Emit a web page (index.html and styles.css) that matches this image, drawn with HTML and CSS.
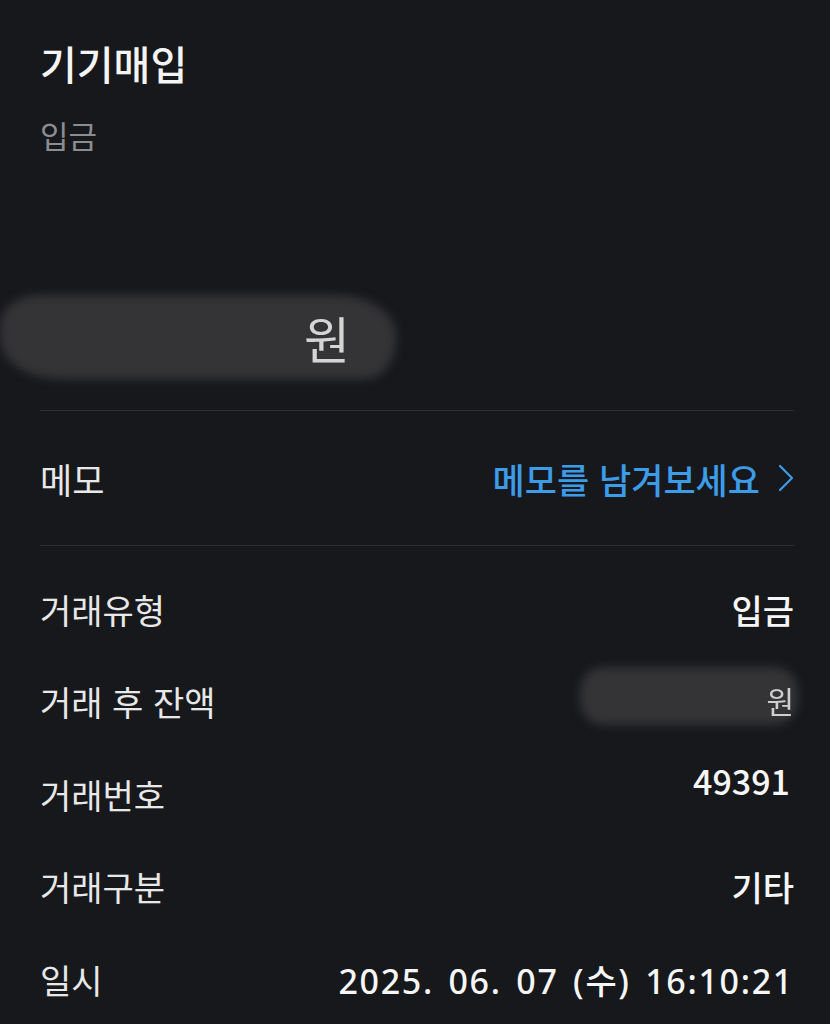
FILE: index.html
```html
<!DOCTYPE html>
<html lang="ko">
<head>
<meta charset="utf-8">
<link rel="stylesheet" href="styles.css">
</head>
<body>
<main class="page">
  <header class="head">
    <h1 class="title">기기매입</h1>
    <p class="subtitle">입금</p>
    <div class="amount">
      <span class="smudge smudge-big"></span>
      <span class="masked masked-big">1,234,567</span><span class="won">원</span>
    </div>
  </header>
  <hr class="divider">
  <section class="memo">
    <span class="label memo-label">메모</span>
    <a class="memo-link">메모를 남겨보세요
      <svg class="chev" width="16" height="28" viewBox="0 0 16 28"><path d="M2 2 L14 14 L2 26" fill="none" stroke="#3d9ce8" stroke-width="2.2" stroke-linecap="round" stroke-linejoin="round"/></svg>
    </a>
  </section>
  <hr class="divider">
  <section class="details">
    <div class="row"><span class="label">거래유형</span><span class="value">입금</span></div>
    <div class="row"><span class="label">거래 후 잔액</span>
      <span class="value balance"><span class="smudge smudge-small"></span><span class="masked masked-small">123,456</span><span class="won-small">원</span></span>
    </div>
    <div class="row"><span class="label">거래번호</span><span class="value raised">49391</span></div>
    <div class="row"><span class="label">거래구분</span><span class="value">기타</span></div>
    <div class="row"><span class="label">일시</span><span class="value date">2025. 06. 07 (수) 16:10:21</span></div>
  </section>
</main>
</body>
</html>
```

FILE: styles.css
```css
html, body {
  margin: 0;
  padding: 0;
  background: #17181c;
}
body {
  font-family: "Noto Sans CJK KR", "Noto Sans", sans-serif;
  color: #ececec;
  width: 830px;
  height: 1024px;
  overflow: hidden;
}
.page {
  padding: 0 36px 0 40px;
}
.head {
  padding-top: 36px;
}
.title {
  margin: 0;
  font-size: 40px;
  line-height: 54px;
  font-weight: 500;
  color: #f4f4f4;
}
.subtitle {
  margin: 24px 0 0;
  font-size: 31px;
  line-height: 42px;
  color: #8c8d91;
  font-weight: 400;
}
.amount {
  position: relative;
  margin-top: 145px;
  height: 72px;
  display: flex;
  align-items: center;
  font-size: 50px;
  font-weight: 400;
  color: #f0f0f0;
}
.masked {
  display: inline-block;
  color: transparent;
  overflow: hidden;
  white-space: nowrap;
}
.masked-big {
  width: 264px;
}
.won {
  position: relative;
  z-index: 2;
  opacity: 0.85;
}
.smudge {
  position: absolute;
  background: #343436;
  filter: blur(5px);
  z-index: 1;
}
.smudge-big {
  left: -40px;
  top: -6px;
  width: 396px;
  height: 84px;
  border-radius: 40px 60px 30px 60px / 30px 40px 40px 40px;
}
.divider {
  margin: 37px 0 0;
  border: 0;
  height: 1px;
  background: #2d2f34;
}
.memo {
  height: 134px;
  display: flex;
  align-items: center;
  justify-content: space-between;
}
.memo + .divider {
  margin-top: 0;
}
.label {
  font-size: 34px;
  color: #e8e8e8;
  font-weight: 400;
}
.memo-label {
  font-size: 35px;
}
.memo-link {
  display: flex;
  align-items: center;
  gap: 18px;
  font-size: 35px;
  font-weight: 500;
  color: #3d9ce8;
}
.chev {
  display: block;
}
.details {
  padding-top: 17px;
}
.row {
  height: 92.5px;
  display: flex;
  align-items: center;
  justify-content: space-between;
}
.value {
  font-size: 34px;
  font-weight: 500;
  color: #f6f6f6;
}
.date {
  font-family: "Noto Sans", "Noto Sans CJK KR", sans-serif;
  letter-spacing: 1.7px;
  word-spacing: 4px;
}
.raised {
  margin-bottom: 28px;
  margin-right: 4px;
}
.balance {
  position: relative;
  display: flex;
  align-items: center;
  margin-bottom: 4px;
}
.masked-small {
  width: 160px;
}
.won-small {
  position: relative;
  z-index: 2;
  opacity: 0.8;
  font-size: 30px;
  font-weight: 400;
}
.smudge-small {
  left: -26px;
  top: -8px;
  width: 218px;
  height: 58px;
  border-radius: 24px;
}
```
